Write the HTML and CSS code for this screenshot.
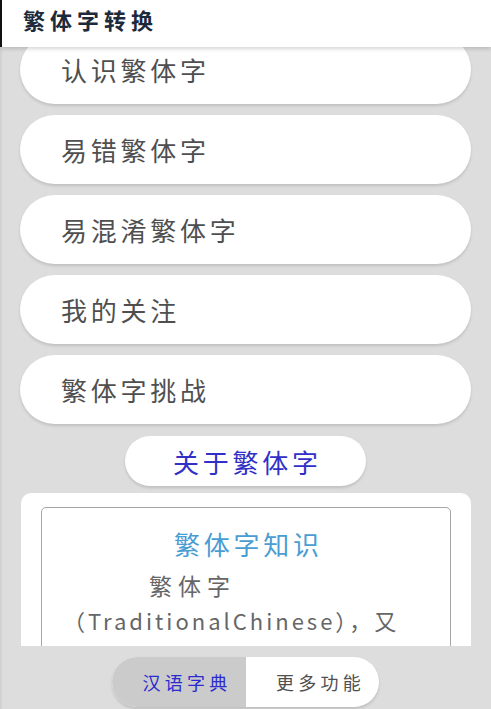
FILE: index.html
```html
<!DOCTYPE html>
<html lang="zh-CN">
<head>
<meta charset="utf-8">
<title>繁体字转换</title>
<link rel="stylesheet" href="styles.css">
</head>
<body>
<div class="app">
  <header class="topbar">
    <h1 class="title">繁体字转换</h1>
  </header>
  <main class="scroll">
    <div class="menu">
      <div class="item">认识繁体字</div>
      <div class="item">易错繁体字</div>
      <div class="item">易混淆繁体字</div>
      <div class="item">我的关注</div>
      <div class="item">繁体字挑战</div>
    </div>
    <div class="about-row">
      <div class="about">关于繁体字</div>
    </div>
    <section class="panel">
      <div class="box">
        <h2 class="box-title">繁体字知识</h2>
        <p class="para"><span class="cjk">繁体字</span>（TraditionalChinese），又</p>
      </div>
    </section>
  </main>
  <nav class="bottombar">
    <div class="tabs">
      <div class="tab tab-active">汉语字典</div>
      <div class="tab">更多功能</div>
    </div>
  </nav>
</div>
</body>
</html>
```

FILE: styles.css
```css
* {
  box-sizing: border-box;
}

html, body {
  margin: 0;
  padding: 0;
}

body {
  font-family: "Noto Sans CJK SC", "Noto Sans", sans-serif;
  background: #dddddd;
}

.app {
  width: 491px;
  height: 709px;
  display: flex;
  flex-direction: column;
  overflow: hidden;
  background: #dddddd;
}

.topbar {
  position: relative;
  z-index: 2;
  flex: 0 0 47px;
  height: 47px;
  background: #ffffff;
  border-left: 2px solid #111111;
  box-shadow: 0 2px 4px rgba(0, 0, 0, 0.16);
  display: flex;
  align-items: center;
  padding-left: 21px;
}

.title {
  margin: 0;
  font-size: 22px;
  font-weight: 700;
  letter-spacing: 5px;
  color: #1c2a3b;
  line-height: 1;
  padding-bottom: 10px;
}

.scroll {
  flex: 1 1 auto;
  overflow: hidden;
  border-left: 2px solid #d2d2d2;
  padding: 0 20px 0 18px;
}

.menu {
  display: flex;
  flex-direction: column;
  gap: 11px;
  margin-top: -12px;
}

.item {
  height: 69px;
  border-radius: 35px;
  background: #ffffff;
  box-shadow: 0 2px 3px rgba(0, 0, 0, 0.13);
  padding: 0 0 0 41px;
  display: flex;
  align-items: center;
  font-size: 26px;
  font-weight: 400;
  letter-spacing: 3.75px;
  color: #4f4f4f;
}

.about-row {
  display: flex;
  justify-content: center;
  margin-top: 12px;
}

.about {
  width: 241px;
  height: 50px;
  border-radius: 25px;
  background: #ffffff;
  box-shadow: 0 2px 3px rgba(0, 0, 0, 0.13);
  display: flex;
  align-items: center;
  justify-content: center;
  font-size: 26px;
  font-weight: 400;
  letter-spacing: 3.75px;
  padding-left: 4px;
  color: #3030c8;
}

.panel {
  margin-top: 7px;
  margin-left: 1px;
  background: #ffffff;
  border-radius: 10px 10px 0 0;
  padding: 14px 20px 0 20px;
  height: 160px;
}

.box {
  border: 1px solid #a6a6a6;
  border-radius: 5px;
  height: 200px;
  padding: 18px 30px 0 21px;
}

.box-title {
  margin: 0;
  text-align: center;
  font-size: 26px;
  font-weight: 400;
  letter-spacing: 3.75px;
  padding-left: 14px;
  line-height: 36px;
  color: #4a9dd3;
}

.para {
  margin: 6px 0 0 0;
  font-size: 22px;
  line-height: 35px;
  letter-spacing: 3px;
  text-indent: 86px;
  color: #666666;
}

.cjk {
  font-size: 23px;
  letter-spacing: 6px;
}

.bottombar {
  flex: 0 0 63px;
  height: 63px;
  border-left: 2px solid #d2d2d2;
  display: flex;
  justify-content: center;
  padding-top: 11px;
  padding-right: 2px;
}

.tabs {
  width: 267px;
  height: 50px;
  border-radius: 25px;
  overflow: hidden;
  display: flex;
  background: #ffffff;
  box-shadow: 0 2px 3px rgba(0, 0, 0, 0.14);
}

.tab {
  flex: 1 1 0;
  display: flex;
  align-items: center;
  justify-content: center;
  padding-left: 16px;
  font-size: 18px;
  font-weight: 400;
  letter-spacing: 4.3px;
  color: #505050;
}

.tab-active {
  flex: 0 0 134px;
  background: #cbcbcb;
  color: #2a2ad0;
}
```
